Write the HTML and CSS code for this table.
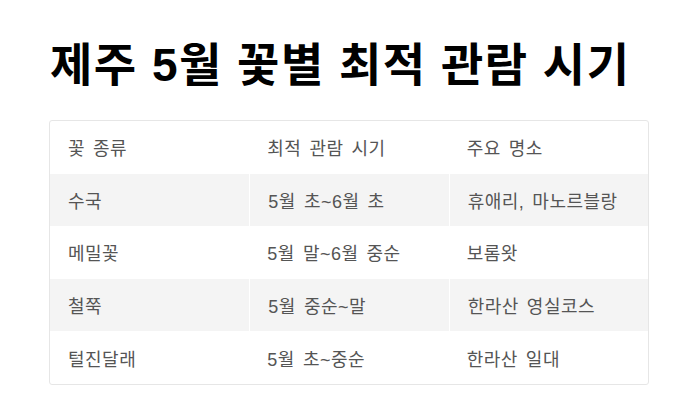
FILE: index.html
```html
<!DOCTYPE html>
<html lang="ko">
<head>
<meta charset="utf-8">
<link rel="stylesheet" href="styles.css">
</head>
<body>
<main class="page">
  <h1 class="title">제주 5월 꽃별 최적 관람 시기</h1>
  <table class="table">
    <thead>
      <tr><th>꽃 종류</th><th>최적 관람 시기</th><th>주요 명소</th></tr>
    </thead>
    <tbody>
      <tr><td>수국</td><td>5월 초~6월 초</td><td>휴애리, 마노르블랑</td></tr>
      <tr><td>메밀꽃</td><td>5월 말~6월 중순</td><td>보롬왓</td></tr>
      <tr><td>철쭉</td><td>5월 중순~말</td><td>한라산 영실코스</td></tr>
      <tr><td>털진달래</td><td>5월 초~중순</td><td>한라산 일대</td></tr>
    </tbody>
  </table>
</main>
</body>
</html>
```
FILE: styles.css
```css
html, body {
  margin: 0;
  padding: 0;
  background: #fff;
}
.page {
  padding: 32px 47px 0 49px;
  font-family: "Liberation Sans", "Noto Sans CJK KR", sans-serif;
}
.title {
  margin: 0 0 22px 1px;
  font-size: 46px;
  font-weight: 700;
  line-height: 66px;
  letter-spacing: 1.5px;
  color: #000;
}
.table {
  width: 600px;
  border-collapse: separate;
  border-spacing: 0;
  border: 1px solid #e6e6e6;
  border-radius: 3px;
  font-size: 18px;
  letter-spacing: 0.5px;
  word-spacing: 2.5px;
  color: #555;
}
.table th, .table td {
  width: 200px;
  height: 52.6px;
  padding: 0 18px;
  text-align: left;
  font-weight: 400;
  box-sizing: border-box;
}
.table tbody tr:nth-child(odd) td {
  background: #f4f4f4;
}
.table tbody tr:nth-child(odd) td + td {
  border-left: 1px solid #fff;
}
```
